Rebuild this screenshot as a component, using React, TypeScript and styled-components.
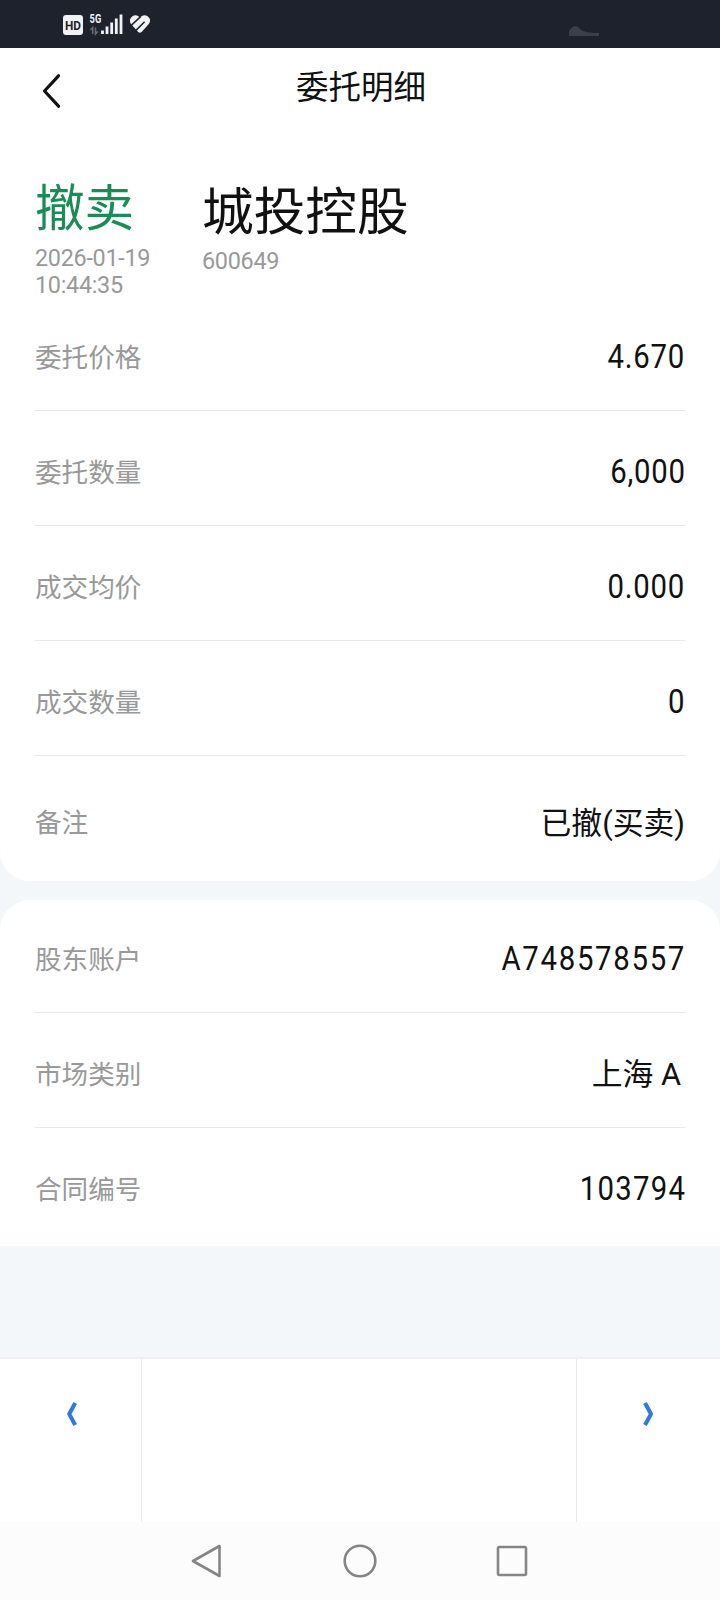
import React from "react";
import styled, { createGlobalStyle } from "styled-components";

const GlobalStyle = createGlobalStyle`
  * { box-sizing: border-box; }
  body {
    margin: 0;
    background: #f3f7fa;
    font-family: Roboto, "Noto Sans CJK SC", sans-serif;
    color: #111;
  }
`;

const Screen = styled.div`
  width: 720px;
  height: 1600px;
  display: flex;
  flex-direction: column;
  background: #f3f7fa;
  overflow: hidden;
`;

const StatusBar = styled.header`
  flex: none;
  height: 48px;
  padding-left: 60px;
  background: #1e222d;
  display: flex;
  justify-content: space-between;
`;

const Sheet = styled.section<{ $height: number; $radius: string; $gap?: number }>`
  flex: none;
  height: ${(p) => p.$height}px;
  margin-bottom: ${(p) => p.$gap ?? 0}px;
  border-radius: ${(p) => p.$radius};
  background: #fff;
  display: flex;
  flex-direction: column;
`;

const TitleBar = styled.div`
  height: 80px;
  display: grid;
  grid-template-columns: 104px 1fr 104px;
  align-items: center;
`;

const BackButton = styled.button`
  border: 0;
  padding: 5px 0 0 42px;
  background: none;
  display: flex;
`;

const Title = styled.h1`
  margin: 0;
  padding: 0 0 0 2px;
  text-align: center;
  font-size: 32.5px;
  line-height: 48px;
  font-weight: 400;
`;

const Summary = styled.div`
  height: 168px;
  padding: 0 35px;
  display: flex;
`;

const SummaryColumn = styled.div<{ $width: number; $top: number }>`
  width: ${(p) => p.$width}px;
  padding-top: ${(p) => p.$top}px;
`;

const Headline = styled.div<{ $size: number; $color: string }>`
  font-size: ${(p) => p.$size}px;
  line-height: 71px;
  color: ${(p) => p.$color};
  white-space: nowrap;
`;

const Meta = styled.div`
  font-size: 23.4px;
  line-height: 27px;
  letter-spacing: -0.3px;
  color: #999;
`;

const Row = styled.div<{ $height: number; $drop?: number; $last?: boolean }>`
  height: ${(p) => p.$height}px;
  margin: 0 35px;
  padding-top: ${(p) => p.$drop ?? 0}px;
  border-bottom: ${(p) => (p.$last ? "0" : "1px solid #e8e8ea")};
  display: flex;
  justify-content: space-between;
  align-items: center;
`;

const Label = styled.span`
  margin-top: 2px;
  font-size: 26.6px;
  line-height: 40px;
  color: #999;
`;

const TextValue = styled.span<{ $end?: number }>`
  margin-top: 3px;
  margin-right: ${(p) => p.$end ?? 0}px;
  font-size: 30.8px;
  line-height: 44px;
  font-weight: 400;
`;

/* Slim numerals, anchored to the right edge of the row. */
const NumberValue = styled.span<{ $spacing?: number }>`
  font-size: 32.6px;
  line-height: 44px;
  font-weight: 400;
  letter-spacing: ${(p) => p.$spacing ?? 0.8}px;
  margin-right: ${(p) => 0.5 - (p.$spacing ?? 0.8)}px;
  transform: scaleX(0.9);
  transform-origin: right center;
`;

const Pager = styled.div`
  flex: none;
  height: 165px;
  margin-top: 111px;
  border-top: 2px solid #edf1f5;
  background: #fff;
  display: grid;
  grid-template-columns: 141px 1fr 144px;
`;

const PagerCell = styled.div<{ $divided?: boolean }>`
  padding-top: 42px;
  border-left: ${(p) => (p.$divided ? "1px solid #e9ecef" : "0")};
  display: flex;
  justify-content: center;
  align-items: flex-start;
`;

const NavBar = styled.nav`
  flex: 1;
  background: #fcfcfc;
  display: flex;
  justify-content: center;
  align-items: center;
  gap: 116px;
`;

const orderRows = [
  { label: "委托价格", value: "4.670" },
  { label: "委托数量", value: "6,000" },
  { label: "成交均价", value: "0.000" },
  { label: "成交数量", value: "0" },
];

const Chevron = ({ flip }: { flip?: boolean }) => (
  <svg width="16" height="26" viewBox="0 0 16 26" fill="none">
    <path
      d={flip ? "M4 2L10 13L4 24" : "M12.2 2L6.2 13L12.2 24"}
      stroke="#3277e0"
      strokeWidth="4"
      strokeLinejoin="round"
    />
  </svg>
);

const StatusIcons = () => (
  <svg width="100" height="48" viewBox="60 0 100 48" fill="none">
    <rect x="63" y="15" width="20" height="20" rx="3" fill="#f1f2f5" />
    <text x="65" y="29.6" textLength="16" lengthAdjust="spacingAndGlyphs" fontFamily="Roboto" fontWeight="700" fontSize="13" fill="#1e222d">HD</text>
    <text x="89.6" y="23" textLength="11.6" lengthAdjust="spacingAndGlyphs" fontFamily="Roboto" fontWeight="700" fontSize="12.8" fill="#f1f2f5">5G</text>
    <path d="M90.5 30l2.2-2.5V34M95.5 27.5V34l2.3-2.5" stroke="#666a73" strokeWidth="1.6" />
    <path d="M102.5 30.5V34M107 26.5V34M111.7 22.5V34M116.3 18.5V34M121 14.5V34" stroke="#f1f2f5" strokeWidth="2.8" />
    <path
      d="M140 17.6Q136.4 14 132.4 16.2Q128.2 19.4 131 24L138.2 32Q139.9 33.4 141.6 32L148.8 24Q152 19.4 147.6 16.2Q143.6 14 140 17.6Z"
      fill="#f1f2f5"
    />
    <path d="M131 25.6L140.6 16.6M136 30.4L144.6 21.8" stroke="#1e222d" strokeWidth="1.5" />
  </svg>
);

export default function App() {
  return (
    <Screen>
      <GlobalStyle />
      <StatusBar>
        <StatusIcons />
        <svg width="160" height="48" viewBox="560 0 160 48">
          <path d="M569 36V31Q575 22 580 29Q584 33 599 33V36Z" fill="#3b3f49" />
        </svg>
      </StatusBar>
      <Sheet $height={833} $radius="0 0 30px 30px" $gap={19}>
        <TitleBar>
          <BackButton aria-label="返回">
            <svg width="20" height="36" viewBox="0 0 20 36" fill="none">
              <path d="M16.5 2.8L2.5 18L16.5 33.2" stroke="#111" strokeWidth="3.2" strokeLinecap="round" strokeLinejoin="round" />
            </svg>
          </BackButton>
          <Title>委托明细</Title>
        </TitleBar>
        <Summary>
          <SummaryColumn $width={167} $top={46}>
            <Headline $size={49.6} $color="#1a8c57">撤卖</Headline>
            <Meta>2026-01-19<br />10:44:35</Meta>
          </SummaryColumn>
          <SummaryColumn $width={300} $top={49}>
            <Headline $size={51.7} $color="#111">城投控股</Headline>
            <Meta>600649</Meta>
          </SummaryColumn>
        </Summary>
        {orderRows.map((r) => (
          <Row key={r.label} $height={115} $drop={7}>
            <Label>{r.label}</Label>
            <NumberValue>{r.value}</NumberValue>
          </Row>
        ))}
        <Row $height={125} $drop={7} $last>
          <Label>备注</Label>
          <TextValue>已撤(买卖)</TextValue>
        </Row>
      </Sheet>
      <Sheet $height={346} $radius="30px 30px 0 0">
        <Row $height={113} $drop={5}>
          <Label>股东账户</Label>
          <NumberValue $spacing={1.9}>A748578557</NumberValue>
        </Row>
        <Row $height={115} $drop={7}>
          <Label>市场类别</Label>
          <TextValue $end={4}>上海 A</TextValue>
        </Row>
        <Row $height={118} $drop={3} $last>
          <Label>合同编号</Label>
          <NumberValue $spacing={1.4}>103794</NumberValue>
        </Row>
      </Sheet>
      <Pager>
        <PagerCell><Chevron /></PagerCell>
        <PagerCell $divided />
        <PagerCell $divided><Chevron flip /></PagerCell>
      </Pager>
      <NavBar>
        <svg width="36" height="36" viewBox="0 0 36 36" fill="none" stroke="#858585" strokeWidth="2.6" strokeLinejoin="round">
          <path d="M29.5 3V33L3 18Z" />
        </svg>
        <svg width="36" height="36" viewBox="0 0 36 36" fill="none" stroke="#858585" strokeWidth="2.6">
          <circle cx="18" cy="18" r="15.3" />
        </svg>
        <svg width="36" height="36" viewBox="0 0 36 36" fill="none" stroke="#858585" strokeWidth="2.6">
          <rect x="4" y="4" width="28" height="28" rx="1.5" />
        </svg>
      </NavBar>
    </Screen>
  );
}
